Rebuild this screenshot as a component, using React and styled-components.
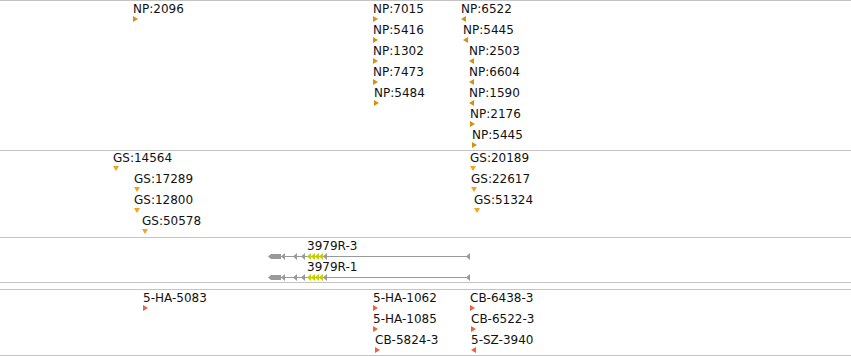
import React from "react";
import styled, { createGlobalStyle } from "styled-components";

const GlobalStyle = createGlobalStyle`
  body {
    margin: 0;
    background: #fff;
    font-family: "DejaVu Sans", "Liberation Sans", sans-serif;
  }
`;

const ROW = 21;

const Browser = styled.div`
  display: flex;
  flex-direction: column;
  width: 851px;
`;

const Track = styled.div`
  position: relative;
  box-sizing: border-box;
  height: ${(props) => props.$height}px;
  border-top: 1px solid #c4c4c4;
  border-bottom: ${(props) => (props.$closed ? "1px solid #c4c4c4" : "none")};
`;

const TrackGap = styled.div`
  height: 6px;
`;

const Feature = styled.div`
  position: absolute;
  left: ${(props) => props.$x}px;
  top: ${(props) => props.$top}px;
  display: flex;
  flex-direction: column;
  align-items: flex-start;
`;

const Label = styled.span`
  display: block;
  height: 14px;
  font-size: 12px;
  line-height: 14px;
  color: #111;
  white-space: nowrap;
  padding-left: ${(props) => props.$indent || 0}px;
`;

const Marker = styled.svg`
  display: block;
  margin-top: ${(props) => props.$gap || 0}px;
`;

const Triangle = ({ dir, color }) => {
  if (dir === "down") {
    return (
      <Marker width="6" height="5" viewBox="0 0 6 5" $gap={1}>
        <polygon points="0,0 6,0 3,5" fill={color} />
      </Marker>
    );
  }
  const pts = dir === "left" ? "5,0 0,3 5,6" : "0,0 5,3 0,6";
  return (
    <Marker width="5" height="6" viewBox="0 0 5 6">
      <polygon points={pts} fill={color} />
    </Marker>
  );
};

// gene model drawn on a 205px wide strip starting at x=267
const GeneGlyph = () => {
  const arrow = (x) => `${x},4.5 ${x + 4},1 ${x + 4},8`;
  return (
    <Marker width="205" height="9" viewBox="0 0 205 9" $gap={-1}>
      <line x1="14" y1="4.5" x2="203" y2="4.5" stroke="#999" strokeWidth="1" />
      <polygon points="1,4.5 4,2 14,2 14,7 4,7" fill="#999" />
      {[14, 26, 34, 56, 199].map((x) => (
        <polygon key={x} points={arrow(x)} fill="#999" />
      ))}
      {[40, 44, 48, 52].map((x) => (
        <polygon key={x} points={arrow(x)} fill="#c4d000" />
      ))}
    </Marker>
  );
};

const npFeatures = [
  { name: "NP:2096", x: 133, row: 0, dir: "right" },
  { name: "NP:7015", x: 373, row: 0, dir: "right" },
  { name: "NP:5416", x: 373, row: 1, dir: "right" },
  { name: "NP:1302", x: 373, row: 2, dir: "right" },
  { name: "NP:7473", x: 373, row: 3, dir: "right" },
  { name: "NP:5484", x: 374, row: 4, dir: "right" },
  { name: "NP:6522", x: 461, row: 0, dir: "left" },
  { name: "NP:5445", x: 463, row: 1, dir: "left" },
  { name: "NP:2503", x: 469, row: 2, dir: "left" },
  { name: "NP:6604", x: 469, row: 3, dir: "left" },
  { name: "NP:1590", x: 469, row: 4, dir: "left" },
  { name: "NP:2176", x: 470, row: 5, dir: "right" },
  { name: "NP:5445", x: 472, row: 6, dir: "right" },
];

const gsFeatures = [
  { name: "GS:14564", x: 113, row: 0 },
  { name: "GS:17289", x: 134, row: 1 },
  { name: "GS:12800", x: 134, row: 2 },
  { name: "GS:50578", x: 142, row: 3 },
  { name: "GS:20189", x: 470, row: 0 },
  { name: "GS:22617", x: 471, row: 1 },
  { name: "GS:51324", x: 474, row: 2 },
];

const genes = [
  { name: "3979R-3", row: 0 },
  { name: "3979R-1", row: 1 },
];

const cloneFeatures = [
  { name: "5-HA-5083", x: 143, row: 0, dir: "right" },
  { name: "5-HA-1062", x: 373, row: 0, dir: "right" },
  { name: "5-HA-1085", x: 373, row: 1, dir: "right" },
  { name: "CB-5824-3", x: 375, row: 2, dir: "right" },
  { name: "CB-6438-3", x: 470, row: 0, dir: "right" },
  { name: "CB-6522-3", x: 471, row: 1, dir: "right" },
  { name: "5-SZ-3940", x: 471, row: 2, dir: "left" },
];

const App = () => {
  return (
    <Browser>
      <GlobalStyle />
      <Track $height={150}>
        {npFeatures.map((f, i) => (
          <Feature key={i} $x={f.x} $top={1 + f.row * ROW}>
            <Label>{f.name}</Label>
            <Triangle dir={f.dir} color="#d4920c" />
          </Feature>
        ))}
      </Track>
      <Track $height={87}>
        {gsFeatures.map((f, i) => (
          <Feature key={i} $x={f.x} $top={f.row * ROW}>
            <Label>{f.name}</Label>
            <Triangle dir="down" color="#f2a41c" />
          </Feature>
        ))}
      </Track>
      <Track $height={46} $closed>
        {genes.map((g) => (
          <Feature key={g.name} $x={267} $top={1 + g.row * ROW}>
            <Label $indent={40}>{g.name}</Label>
            <GeneGlyph />
          </Feature>
        ))}
      </Track>
      <TrackGap />
      <Track $height={67} $closed>
        {cloneFeatures.map((f, i) => (
          <Feature key={i} $x={f.x} $top={1 + f.row * ROW}>
            <Label>{f.name}</Label>
            <Triangle dir={f.dir} color="#f2603c" />
          </Feature>
        ))}
      </Track>
    </Browser>
  );
};

export default App;
